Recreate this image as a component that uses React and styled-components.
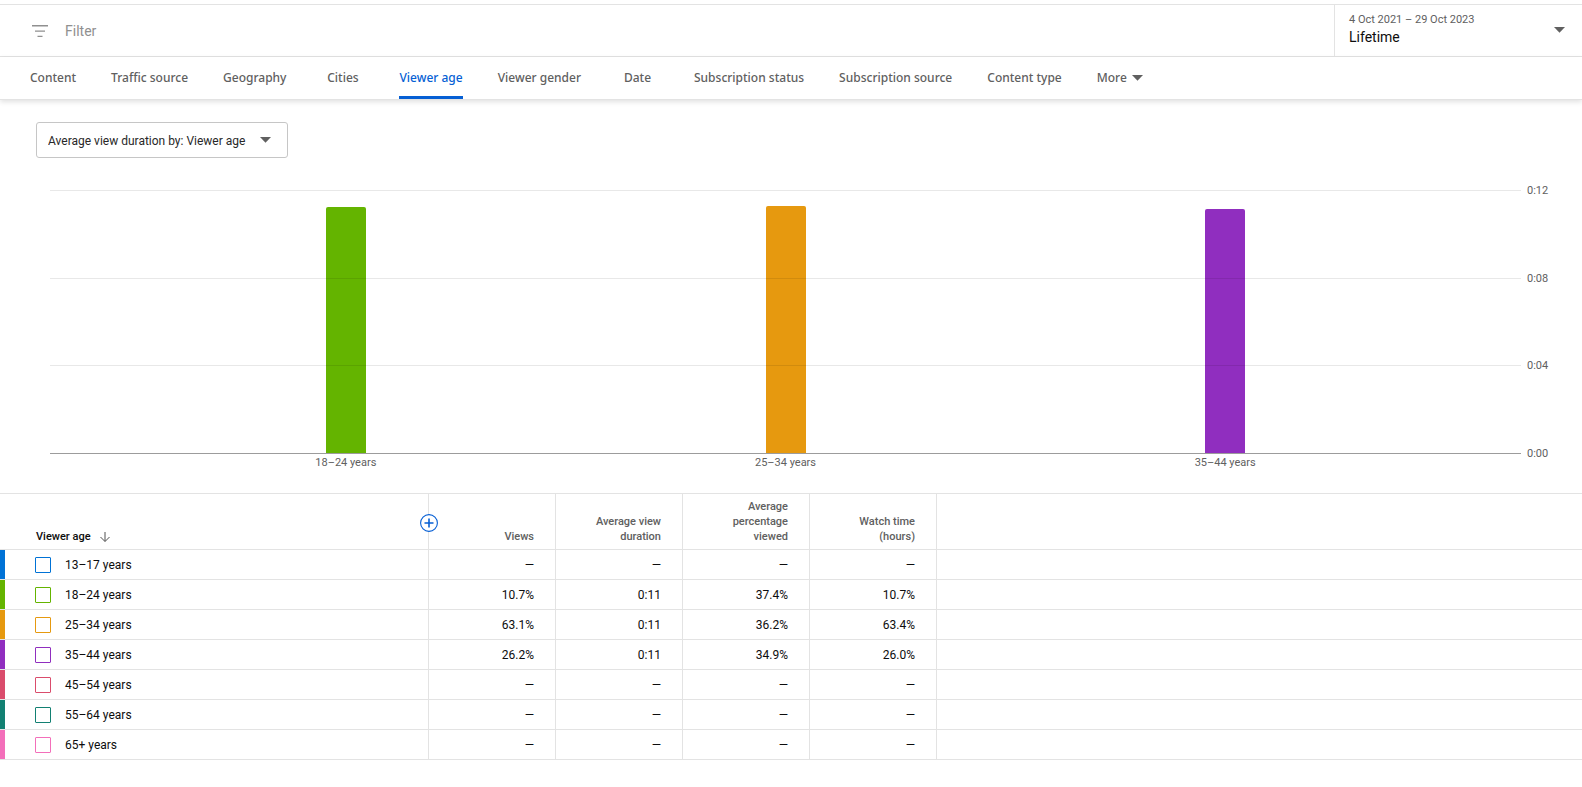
import styled, { createGlobalStyle } from 'styled-components';
import { useState } from 'react';

const palette = {
  text: '#0d0d0d',
  subText: '#606060',
  hint: '#909090',
  line: '#e3e3e3',
  blue: '#065fd4',
};

const GlobalStyle = createGlobalStyle`
  * {
    box-sizing: border-box;
  }

  body {
    margin: 0;
    background: white;
    color: ${palette.text};
    font-family: Roboto, 'Liberation Sans', sans-serif;
    font-size: 12px;
  }

  button, input, select {
    margin: 0;
    padding: 0;
    border: none;
    background: none;
    font-family: inherit;
    color: inherit;
  }

  button, select {
    cursor: pointer;
  }
`;

const Page = styled.div`
  padding-top: 4px;
`;

const FilterBar = styled.div`
  display: flex;
  height: 53px;
  border-top: 1px solid ${palette.line};
  border-bottom: 1px solid ${palette.line};
`;

const FilterLabel = styled.label`
  display: flex;
  flex: 1;
  align-items: center;
  gap: 17px;
  padding-left: 32px;

  svg {
    flex: none;
  }

  input {
    flex: 1;
    height: 24px;
    outline: none;
    font-size: 14px;
  }

  input::placeholder {
    color: ${palette.hint};
    opacity: 1;
  }
`;

const DateButton = styled.button`
  display: flex;
  align-items: center;
  justify-content: space-between;
  width: 248px;
  padding: 0 17px 2px 14px;
  border-left: 1px solid ${palette.line};
  text-align: left;
`;

const DateRange = styled.div`
  font-size: 11px;
  line-height: 16px;
  color: ${palette.subText};
`;

const DateName = styled.div`
  padding-bottom: 2px;
  font-size: 14px;
  line-height: 18px;
`;

const TabBar = styled.nav`
  display: flex;
  gap: 35px;
  height: 43px;
  padding-left: 30px;
  border-bottom: 1px solid ${palette.line};
  box-shadow: 0 2px 5px rgba(0, 0, 0, 0.12);
`;

const Tab = styled.button`
  display: flex;
  align-items: center;
  justify-content: center;
  gap: 5px;
  min-width: 43px;
  padding-top: 2px;
  border-bottom: 3px solid ${({ $active }) => ($active ? palette.blue : 'transparent')};
  border-radius: 2px 2px 0 0;
  font-family: 'Noto Sans', sans-serif;
  font-size: 12px;
  font-weight: 500;
  white-space: nowrap;
  color: ${({ $active }) => ($active ? palette.blue : palette.subText)};
`;

const ChartSection = styled.section`
  padding: 22px 30px 23px 36px;
`;

const SelectBox = styled.div`
  display: inline-flex;
  position: relative;
  align-items: center;
  height: 36px;
  border: 1px solid #c6c6c6;
  border-radius: 3px;

  select {
    appearance: none;
    height: 34px;
    padding: 1px 41px 0 11px;
    outline: none;
    font-size: 12px;
    color: #282828;
  }

  svg {
    position: absolute;
    right: 16px;
    pointer-events: none;
  }
`;

const Chart = styled.div`
  display: grid;
  grid-template-columns: 1fr 25px;
  gap: 2px 6px;
  margin-top: 32px;
  padding-left: 14px;
  font-size: 11px;
  line-height: 14px;
  color: ${palette.subText};
`;

const Plot = styled.div`
  position: relative;
  height: 264px;
`;

const GridLines = styled.div`
  position: absolute;
  inset: 0;
  display: flex;
  flex-direction: column;
  justify-content: space-between;

  div {
    height: 1px;
    background: rgba(0, 0, 0, 0.09);
  }

  div:last-child {
    background: #9c9c9c;
  }
`;

const Columns = styled.div`
  display: flex;
  align-items: flex-end;
  height: 100%;
  padding: 0 76px;
`;

const Column = styled.div`
  display: flex;
  flex: 1;
  align-items: flex-end;
  justify-content: center;
  height: 100%;
  text-align: center;
`;

const Bar = styled.div`
  width: 40px;
  border-radius: 2px 2px 0 0;
  background: ${({ $color }) => $color};
`;

const AxisLabels = styled.div`
  display: flex;
  flex-direction: column;
  justify-content: space-between;
  margin: -6px 0 -7px;
`;

const Table = styled.table`
  width: 100%;
  table-layout: fixed;
  border-collapse: separate;
  border-spacing: 0;
  border-top: 1px solid ${palette.line};
`;

const HeadCell = styled.th`
  position: relative;
  width: ${({ $width }) => $width || 'auto'};
  height: 56px;
  padding: ${({ $first }) => ($first ? '0 0 5px 36px' : '4px 21px 5px 30px')};
  border-right: ${({ $last }) => ($last ? 'none' : `1px solid ${palette.line}`)};
  border-bottom: 1px solid ${palette.line};
  font-size: 11px;
  font-weight: 500;
  line-height: 15px;
  text-align: ${({ $first }) => ($first ? 'left' : 'right')};
  vertical-align: bottom;
  color: ${palette.subText};
`;

const SortButton = styled.button`
  display: flex;
  align-items: center;
  gap: 9px;
  font-size: 11px;
  font-weight: 500;
  line-height: 15px;
  color: ${palette.text};
`;

const AddButton = styled.button`
  position: absolute;
  top: 20px;
  right: -10px;
  z-index: 1;
  width: 18px;
  height: 18px;

  svg {
    display: block;
  }
`;

const Cell = styled.td`
  height: 30px;
  padding: 0 21px 0 0;
  border-right: ${({ $last }) => ($last ? 'none' : `1px solid ${palette.line}`)};
  border-bottom: 1px solid ${palette.line};
  text-align: right;
`;

const NameCell = styled(Cell)`
  padding: 0 0 0 35px;
  box-shadow: inset 5px 0 ${({ $color }) => $color};
  text-align: left;

  label {
    display: flex;
    align-items: center;
    gap: 14px;
  }
`;

const CheckBox = styled.input`
  appearance: none;
  width: 16px;
  height: 16px;
  border: 1px solid ${({ $color }) => $color};
  border-radius: 1px;

  &:checked {
    background: ${({ $color }) => $color};
  }
`;

const tabs = [
  'Content',
  'Traffic source',
  'Geography',
  'Cities',
  'Viewer age',
  'Viewer gender',
  'Date',
  'Subscription status',
  'Subscription source',
  'Content type',
];

const columns = ['Views', 'Average view duration', 'Average percentage viewed', 'Watch time (hours)'];

const rows = [
  { name: '13–17 years', color: '#0072d6', values: ['—', '—', '—', '—'] },
  { name: '18–24 years', color: '#64b400', values: ['10.7%', '0:11', '37.4%', '10.7%'], height: 93.5 },
  { name: '25–34 years', color: '#e6990f', values: ['63.1%', '0:11', '36.2%', '63.4%'], height: 93.9 },
  { name: '35–44 years', color: '#902ebf', values: ['26.2%', '0:11', '34.9%', '26.0%'], height: 92.8 },
  { name: '45–54 years', color: '#da4c6c', values: ['—', '—', '—', '—'] },
  { name: '55–64 years', color: '#128072', values: ['—', '—', '—', '—'] },
  { name: '65+ years', color: '#f36fba', values: ['—', '—', '—', '—'] },
];

const bars = rows.filter((row) => row.height);

const Caret = () => (
  <svg width="11" height="6" viewBox="0 0 11 6" aria-hidden="true">
    <path d="M0 0h11L5.5 5.8z" fill="#606060" />
  </svg>
);

const App = () => {
  const [activeTab, setActiveTab] = useState('Viewer age');

  return (
    <Page>
      <GlobalStyle />
      <FilterBar>
        <FilterLabel>
          <svg width="16" height="12" viewBox="0 0 16 12" fill="#909090" aria-hidden="true">
            <path d="M0 0h16v1.5H0zM3 5.5h10v1.3H3zM5.5 10.7h5V12h-5z" />
          </svg>
          <input type="text" placeholder="Filter" aria-label="Filter" />
        </FilterLabel>
        <DateButton>
          <div>
            <DateRange>4 Oct 2021 – 29 Oct 2023</DateRange>
            <DateName>Lifetime</DateName>
          </div>
          <Caret />
        </DateButton>
      </FilterBar>

      <TabBar>
        {tabs.map((tab) => (
          <Tab key={tab} $active={tab === activeTab} onClick={() => setActiveTab(tab)}>
            {tab}
          </Tab>
        ))}
        <Tab>
          More
          <Caret />
        </Tab>
      </TabBar>

      <ChartSection>
        <SelectBox>
          <select aria-label="Chart metric">
            <option>Average view duration by: Viewer age</option>
          </select>
          <Caret />
        </SelectBox>
        <Chart>
          <Plot>
            <Columns>
              {bars.map(({ name, color, height }) => (
                <Column key={name}>
                  <Bar $color={color} style={{ height: `${height}%` }} />
                </Column>
              ))}
            </Columns>
            <GridLines>
              <div />
              <div />
              <div />
              <div />
            </GridLines>
          </Plot>
          <AxisLabels>
            <span>0:12</span>
            <span>0:08</span>
            <span>0:04</span>
            <span>0:00</span>
          </AxisLabels>
          <Columns>
            {bars.map(({ name }) => (
              <Column key={name}>{name}</Column>
            ))}
          </Columns>
        </Chart>
      </ChartSection>

      <Table>
        <thead>
          <tr>
            <HeadCell $first $width="429px">
              <SortButton>
                Viewer age
                <svg width="10" height="10" viewBox="0 0 10 10" fill="none" stroke="#505050" aria-hidden="true">
                  <path d="M5 0v9.3M0.5 5L5 9.5 9.5 5" />
                </svg>
              </SortButton>
              <AddButton aria-label="Add metric">
                <svg width="18" height="18" viewBox="0 0 18 18" fill="none" stroke={palette.blue}>
                  <circle cx="9" cy="9" r="8.4" fill="white" strokeWidth="1.1" />
                  <path d="M9 4.5v9M4.5 9h9" strokeWidth="1.6" />
                </svg>
              </AddButton>
            </HeadCell>
            {columns.map((column) => (
              <HeadCell key={column} $width="127px">
                {column}
              </HeadCell>
            ))}
            <HeadCell as="td" $last />
          </tr>
        </thead>
        <tbody>
          {rows.map(({ name, color, values }) => (
            <tr key={name}>
              <NameCell $color={color}>
                <label>
                  <CheckBox type="checkbox" $color={color} />
                  {name}
                </label>
              </NameCell>
              {values.map((value, index) => (
                <Cell key={columns[index]}>{value}</Cell>
              ))}
              <Cell $last />
            </tr>
          ))}
        </tbody>
      </Table>
    </Page>
  );
};

export default App;
